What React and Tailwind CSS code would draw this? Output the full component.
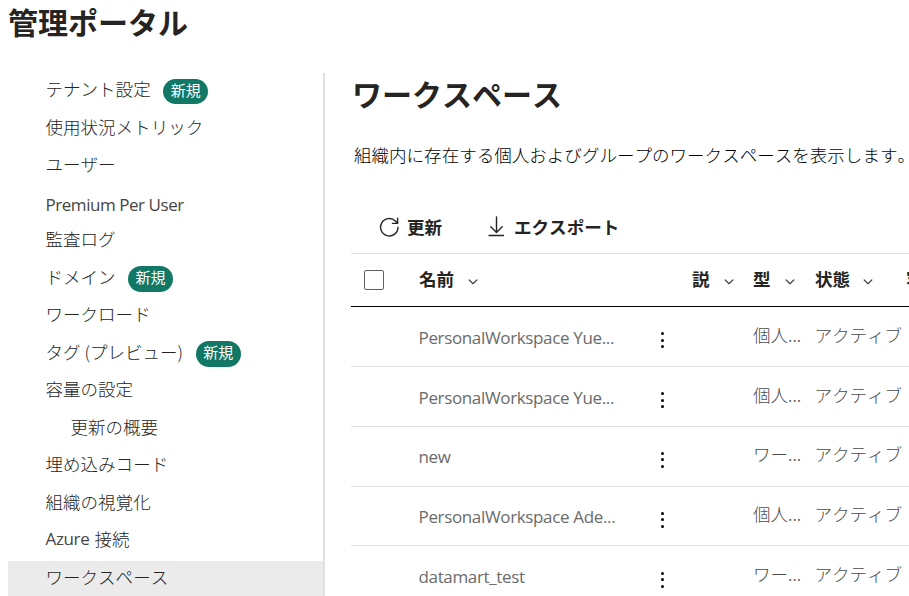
const navItems = [
  { label: 'テナント設定', isNew: true },
  { label: '使用状況メトリック' },
  { label: 'ユーザー' },
  { label: 'Premium Per User', latin: true },
  { label: '監査ログ' },
  { label: 'ドメイン', isNew: true },
  { label: 'ワークロード' },
  { label: 'タグ (プレビュー)', isNew: true },
  { label: '容量の設定' },
  { label: '更新の概要', nested: true },
  { label: '埋め込みコード' },
  { label: '組織の視覚化' },
  { label: '接続', prefix: 'Azure' },
  { label: 'ワークスペース', active: true },
];

const rows = [
  { name: 'PersonalWorkspace Yue...', type: '個人...' },
  { name: 'PersonalWorkspace Yue...', type: '個人...' },
  { name: 'new', type: 'ワー...' },
  { name: 'PersonalWorkspace Ade...', type: '個人...' },
  { name: 'datamart_test', type: 'ワー...' },
];

const latin = "font-['Open_Sans','Noto_Sans_CJK_JP',sans-serif] font-normal";

function Chevron() {
  return (
    <svg className="mt-1 h-[6px] w-[10px] shrink-0" viewBox="0 0 10 6" fill="none" stroke="#424242" strokeWidth="1.2" strokeLinecap="round" strokeLinejoin="round">
      <path d="M1.2 1 5 4.7 8.8 1" />
    </svg>
  );
}

function NavItem({ item }) {
  return (
    <li className={`flex h-[37.5px] items-start ${item.nested ? 'pl-[62.5px]' : 'pl-[37.5px]'} ${item.active ? 'bg-[#ebebeb]' : ''}`}>
      {item.latin ? (
        <span className={`pt-[5px] text-[17px] leading-[28px] tracking-[-0.45px] text-[#484644] ${latin}`}>{item.label}</span>
      ) : (
        <span className="flex pt-[1.5px] leading-[28px]">
          {item.prefix && <span className={`mr-[5px] text-[17px] tracking-[-0.35px] text-[#484644] ${latin}`}>{item.prefix}</span>}
          {item.label}
        </span>
      )}
      {item.isNew && (
        <span className="ml-[12.5px] mt-[5px] flex h-[25.5px] w-[45px] justify-center rounded-full bg-[#117865] text-[15px] font-normal leading-[22px] text-white">
          新規
        </span>
      )}
    </li>
  );
}

function HeaderCell({ label, className, gap }) {
  return (
    <div className={`flex shrink-0 items-center ${className}`}>
      <span className={`pb-px ${gap}`}>{label}</span>
      <Chevron />
    </div>
  );
}

export default function App() {
  return (
    <div className="h-[596px] w-[909px] overflow-hidden bg-white font-['Noto_Sans_CJK_JP',sans-serif] text-[17.55px] font-light text-[#252423] [font-kerning:none]">
      <h1 className="h-[73px] pl-[8px] text-[30px] font-bold leading-[42px] text-[#252423]">管理ポータル</h1>
      <div className="flex h-[523px]">
        <nav className="ml-2 w-[317px] shrink-0 border-r-2 border-[#e1e1e1]">
          <ul className="pt-[0.5px]">
            {navItems.map((item) => (
              <NavItem key={item.label} item={item} />
            ))}
          </ul>
        </nav>
        <main className="ml-[26px] min-w-0 flex-1">
          <h2 className="h-[66px] pl-px text-[30px] font-bold leading-[41px] text-[#252423]">ワークスペース</h2>
          <p className="h-[66px] whitespace-nowrap pl-[3px] leading-[32px] text-black">
            組織内に存在する個人およびグループのワークスペースを表示します。
          </p>
          <div className="flex h-12 items-start pl-7 font-bold leading-[44px] text-[#252423]">
            <svg className="mr-2 mt-[12px] h-5 w-5" viewBox="0 0 20 20" fill="none" stroke="currentColor" strokeWidth="1.4" strokeLinecap="round" strokeLinejoin="round">
              <path d="M19 10.2A8.7 8.7 0 1 1 16.4 4L18.3 6" />
              <path d="M18.6 1.3V6.4H13.5" />
            </svg>
            <span>更新</span>
            <svg className="ml-[46px] mr-[10px] mt-[11px] h-[21px] w-4" viewBox="0 0 16 21" fill="none" stroke="currentColor" strokeWidth="1.4" strokeLinecap="round" strokeLinejoin="round">
              <path d="M8.5 1V16.5M2.8 10.8 8.5 16.5 14.2 10.8M1 19.5H15.5" />
            </svg>
            <span>エクスポート</span>
          </div>
          <div className="overflow-hidden border-t border-[#e0e0e0]">
            <div className="flex h-[53px] items-center border-b border-black font-bold">
              <div className="ml-[13px] mr-[35px] h-5 w-5 shrink-0 rounded-[2px] border border-[#616161]" />
              <HeaderCell label="名前" gap="mr-[14px]" className="w-[273px]" />
              <HeaderCell label="説" gap="mr-[14px]" className="w-[61px]" />
              <HeaderCell label="型" gap="mr-[14px]" className="w-[62px]" />
              <HeaderCell label="状態" gap="mr-[13px]" className="w-[91px]" />
              <span className="shrink-0 pb-px">容量</span>
            </div>
            {rows.map((row, i) => (
              <div key={i} className="flex h-[59.85px] items-center border-b border-[#e0e0e0] pl-[67.5px] text-[#616161]">
                <span className={`w-[236px] shrink-0 whitespace-nowrap pt-[2px] text-[17px] tracking-[-0.35px] text-[#6b6b6b] ${latin}`}>{row.name}</span>
                <div className="mt-[7.5px] flex w-[98.5px] shrink-0 flex-col gap-[3.5px] pl-[6px]">
                  <i className="size-[3px] rounded-full bg-black" />
                  <i className="size-[3px] rounded-full bg-black" />
                  <i className="size-[3px] rounded-full bg-black" />
                </div>
                <span className="w-[61.5px] shrink-0 whitespace-nowrap pb-[3px] text-[#4c4c4c]">{row.type}</span>
                <span className="shrink-0 whitespace-nowrap pb-[3px] text-[#4c4c4c]">アクティブ</span>
              </div>
            ))}
          </div>
        </main>
      </div>
    </div>
  );
}
